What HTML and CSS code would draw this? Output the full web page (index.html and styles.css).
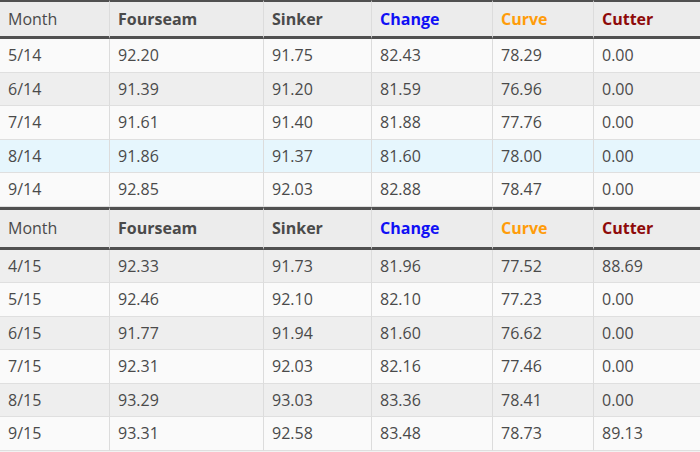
FILE: index.html
```html
<!DOCTYPE html>
<html>
<head>
<meta charset="utf-8">
<link rel="stylesheet" href="styles.css">
</head>
<body>
<div class="wrap">
<table class="velo first">
  <colgroup><col class="c1"><col class="c2"><col class="c3"><col class="c4"><col class="c5"><col class="c6"></colgroup>
  <thead>
    <tr><th class="month">Month</th><th>Fourseam</th><th>Sinker</th><th class="change">Change</th><th class="curve">Curve</th><th class="cutter">Cutter</th></tr>
  </thead>
  <tbody>
    <tr class="light"><td>5/14</td><td>92.20</td><td>91.75</td><td>82.43</td><td>78.29</td><td>0.00</td></tr>
    <tr class="grey"><td>6/14</td><td>91.39</td><td>91.20</td><td>81.59</td><td>76.96</td><td>0.00</td></tr>
    <tr class="light"><td>7/14</td><td>91.61</td><td>91.40</td><td>81.88</td><td>77.76</td><td>0.00</td></tr>
    <tr class="hover"><td>8/14</td><td>91.86</td><td>91.37</td><td>81.60</td><td>78.00</td><td>0.00</td></tr>
    <tr class="light"><td>9/14</td><td>92.85</td><td>92.03</td><td>82.88</td><td>78.47</td><td>0.00</td></tr>
  </tbody>
</table>
<table class="velo second">
  <colgroup><col class="c1"><col class="c2"><col class="c3"><col class="c4"><col class="c5"><col class="c6"></colgroup>
  <thead>
    <tr><th class="month">Month</th><th>Fourseam</th><th>Sinker</th><th class="change">Change</th><th class="curve">Curve</th><th class="cutter">Cutter</th></tr>
  </thead>
  <tbody>
    <tr class="grey"><td>4/15</td><td>92.33</td><td>91.73</td><td>81.96</td><td>77.52</td><td>88.69</td></tr>
    <tr class="light"><td>5/15</td><td>92.46</td><td>92.10</td><td>82.10</td><td>77.23</td><td>0.00</td></tr>
    <tr class="grey"><td>6/15</td><td>91.77</td><td>91.94</td><td>81.60</td><td>76.62</td><td>0.00</td></tr>
    <tr class="light"><td>7/15</td><td>92.31</td><td>92.03</td><td>82.16</td><td>77.46</td><td>0.00</td></tr>
    <tr class="grey"><td>8/15</td><td>93.29</td><td>93.03</td><td>83.36</td><td>78.41</td><td>0.00</td></tr>
    <tr class="light"><td>9/15</td><td>93.31</td><td>92.58</td><td>83.48</td><td>78.73</td><td>89.13</td></tr>
  </tbody>
</table>
</div>
</body>
</html>
```
FILE: styles.css
```css
html, body {
  margin: 0;
  padding: 0;
  background: #f2f2f2;
}
.wrap {
  width: 700px;
  display: flex;
  flex-direction: column;
}
.velo {
  width: 700px;
  table-layout: fixed;
  border-collapse: separate;
  border-spacing: 0;
  font-family: "Open Sans", "DejaVu Sans", sans-serif;
  font-size: 16px;
  color: #4a4a4a;
}
.c1 { width: 109px; }
.c2 { width: 154px; }
.c3 { width: 108px; }
.c4 { width: 121px; }
.c5 { width: 101px; }
.c6 { width: 107px; }
.velo th,
.velo td {
  text-align: left;
  padding-left: 8px;
  padding-right: 0;
  border-left: 1px solid #dcdcdc;
  white-space: nowrap;
  line-height: 20px;
  vertical-align: middle;
}
.velo th:first-child,
.velo td:first-child {
  border-left: none;
}
.velo th {
  background: #ececec;
  font-weight: 700;
  color: #4a4a4a;
  border-top: 3.5px solid #505050;
  border-bottom: 3.5px solid #505050;
  padding-top: 7px;
  padding-bottom: 7px;
}
.first th {
  border-top-width: 2px;
}
.second th {
  padding-top: 8.5px;
  padding-bottom: 8.5px;
}
.velo th.month {
  font-weight: 400;
}
.velo th.change { color: #1010f5; }
.velo th.curve { color: #ff9c0a; }
.velo th.cutter { color: #8e0a0a; }
.velo td {
  padding-top: 6.25px;
  padding-bottom: 6.25px;
  border-bottom: 1px solid #dfdfdf;
}
.light td { background: #fafafa; }
.grey td { background: #eeeeee; }
.hover td { background: #e6f6fd; }
```
